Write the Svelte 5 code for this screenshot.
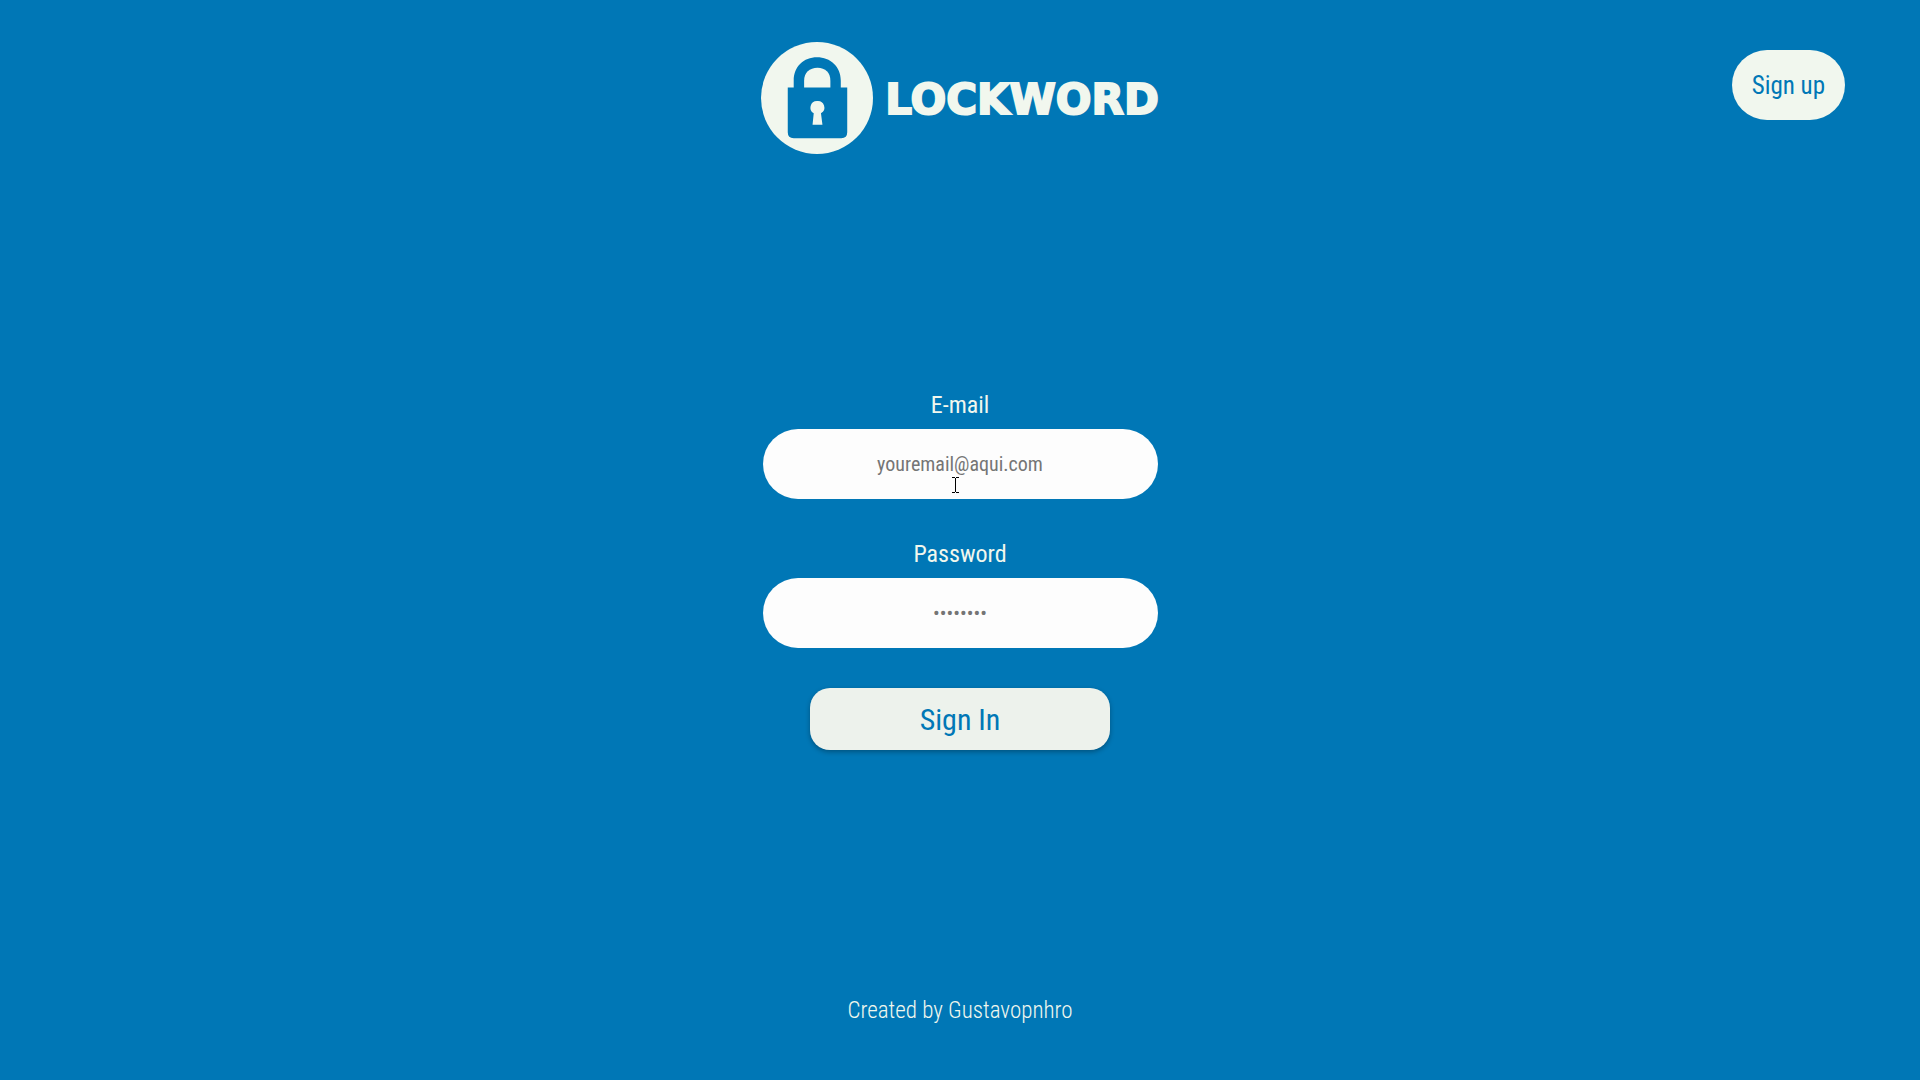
<script>
  let email = $state('');
  let password = $state('');
</script>

<div class="page">
  <header class="top">
    <div class="brand">
      <svg class="mark" viewBox="0 0 113 113" aria-hidden="true">
        <circle class="light" cx="56.5" cy="56.5" r="56.5" />
        <path
          class="dark"
          d="M33 46V39C33 25 43 15.500 56.500 15.500S80.500 25 80.500 39V46H87V91Q87 97 81 97H33Q27 97 27 91V46Z"
        />
        <path class="light" d="M43.500 46V39C43.500 31 49 26 57 26S70 31 70 39V46Z" />
        <path
          class="light"
          d="M56.500 59.500A6.700 6.700 0 0 1 60.500 72L62 83.500H52L53.200 72A6.700 6.700 0 0 1 56.500 59.500Z"
        />
      </svg>
      <h1>LOCKWORD</h1>
    </div>
    <a class="signup" href="#signup">Sign up</a>
  </header>

  <main>
    <form onsubmit={(event) => event.preventDefault()}>
      <div class="field">
        <label for="email">E-mail</label>
        <div class="control">
          <input id="email" type="email" placeholder="youremail@aqui.com" bind:value={email} />
          <svg class="cursor" viewBox="0 0 7 17" aria-hidden="true">
            <path d="M0 .5H3M4 .5H7M3.500 1V15M0 15.500H3M4 15.500H7" />
          </svg>
        </div>
      </div>
      <div class="field">
        <label for="password">Password</label>
        <input id="password" type="password" placeholder="••••••••" bind:value={password} />
      </div>
      <button type="submit">Sign In</button>
    </form>
  </main>

  <footer>Created by Gustavopnhro</footer>
</div>

<style>
  :global(body) {
    margin: 0;
    background: #0077b6;
  }

  .page {
    --blue: #0077b6;
    --cream: #f1f7ee;
    box-sizing: border-box;
    min-height: 100vh;
    display: grid;
    grid-template-rows: 200px 1fr 140px;
    background: var(--blue);
    color: var(--cream);
    font-family: 'Roboto Condensed', 'Liberation Sans Narrow', Roboto, sans-serif;
    font-size: 24px;
    line-height: 30px;
  }

  .top {
    display: grid;
    grid-template-columns: 1fr auto 1fr;
    align-items: start;
    padding: 42px 75px 0;
  }

  .brand {
    grid-column: 2;
    display: flex;
    align-items: center;
    gap: 12px;
  }

  .mark {
    width: 112px;
    height: 112px;
  }

  .light {
    fill: var(--cream);
  }

  .dark {
    fill: var(--blue);
  }

  h1 {
    margin: 0;
    padding-top: 4px;
    font: 700 42px/48px 'DejaVu Sans', sans-serif;
    -webkit-text-stroke: 2px var(--cream);
  }

  .signup {
    justify-self: end;
    box-sizing: border-box;
    margin-top: 8px;
    padding: 21px 20px 19px;
    border-radius: 35px;
    background: var(--cream);
    color: var(--blue);
    font-size: 25px;
    text-decoration: none;
  }

  main {
    display: flex;
    align-items: center;
    justify-content: center;
  }

  form {
    display: flex;
    flex-direction: column;
    align-items: center;
    gap: 40px;
  }

  .field {
    display: flex;
    flex-direction: column;
    align-items: center;
    gap: 9px;
  }

  .control {
    position: relative;
    display: flex;
  }

  input {
    box-sizing: border-box;
    width: 395px;
    max-width: 90vw;
    height: 70px;
    padding: 0 32px;
    border: 0;
    border-radius: 35px;
    background: #fdfdfd;
    color: #333;
    font: inherit;
    font-size: 20px;
    text-align: center;
  }

  input::placeholder {
    color: #757575;
    opacity: 1;
  }

  .cursor {
    position: absolute;
    left: 189px;
    top: 48px;
    width: 7px;
    height: 17px;
    fill: none;
    stroke: #000;
    stroke-width: 1;
    pointer-events: none;
  }

  button {
    width: 300px;
    height: 62px;
    padding: 2px 0 0;
    border: 0;
    border-radius: 20px;
    background: #edf2ec;
    box-shadow: 0 2px 5px rgba(0, 0, 0, 0.3);
    color: var(--blue);
    font: inherit;
    font-size: 30px;
    cursor: pointer;
  }

  footer {
    display: flex;
    align-items: center;
    justify-content: center;
    padding-top: 2px;
    font-size: 23px;
    font-weight: 300;
  }
</style>
